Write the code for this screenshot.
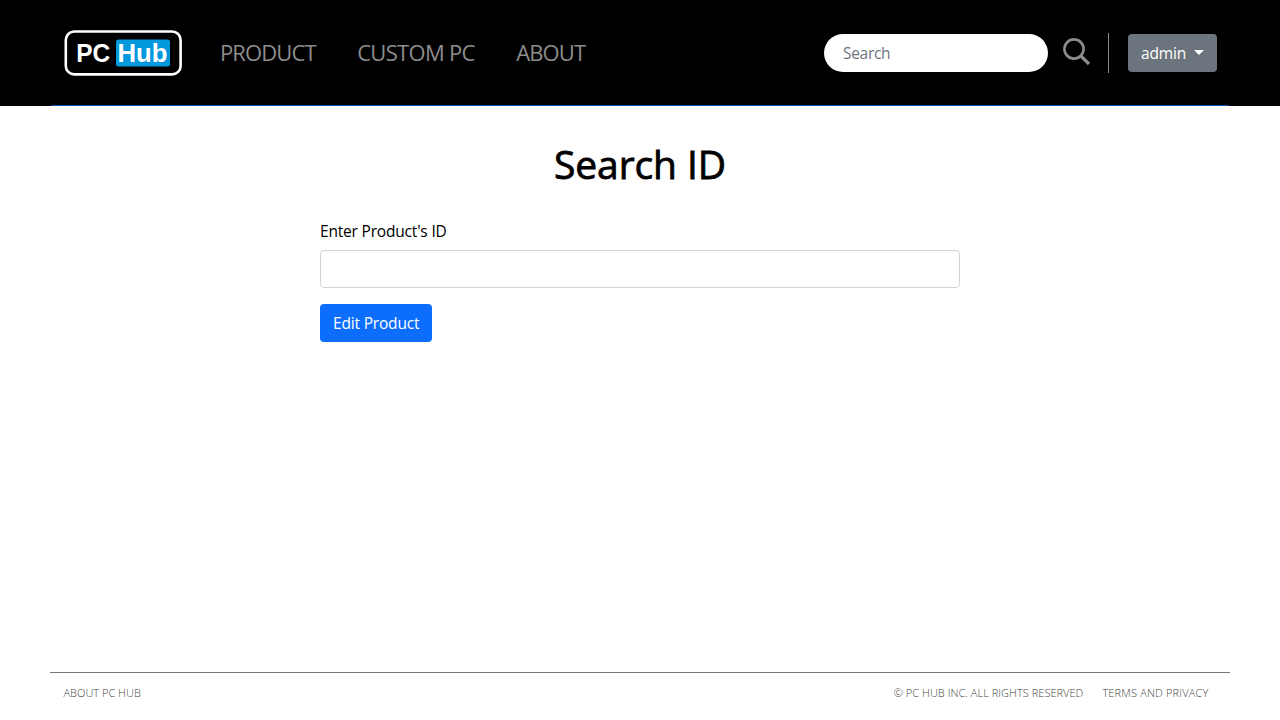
<svelte:head><title>PC Hub</title></svelte:head>

<div class="page">
  <header>
    <div class="bar">
      <a class="logo" href="#home" aria-label="PC Hub">
        <svg width="118" height="46" viewBox="0 0 118 46">
          <rect x="1.8" y="1.5" width="114.8" height="42.9" rx="8.5" fill="none" stroke="#fff" stroke-width="2.6" />
          <rect x="52" y="9.5" width="54" height="27" rx="2.5" fill="#0499dd" />
          <text x="12.3" y="32" textLength="34" lengthAdjust="spacingAndGlyphs">PC</text>
          <text x="53.5" y="32" textLength="50" lengthAdjust="spacingAndGlyphs">Hub</text>
        </svg>
      </a>
      <nav>
        <a class="n1" href="#product">PRODUCT</a>
        <a class="n2" href="#custom">CUSTOM PC</a>
        <a class="n3" href="#about">ABOUT</a>
      </nav>
      <input class="search" placeholder="Search" />
      <svg class="glass" width="28" height="28" viewBox="0 0 28 28" fill="none" stroke="#8c8c8c">
        <circle cx="11" cy="11" r="9.6" stroke-width="2.6" />
        <path d="M17.8 17.8 L26 26" stroke-width="3.2" />
      </svg>
      <div class="rule"></div>
      <button class="admin">admin<span class="caret"></span></button>
    </div>
  </header>

  <main>
    <h1>Search ID</h1>
    <label for="pid">Enter Product's ID</label>
    <input id="pid" class="field" />
    <button class="edit">Edit Product</button>
  </main>

  <footer>
    <a class="f1" href="#about">ABOUT PC HUB</a>
    <span class="f2">© PC HUB INC. ALL RIGHTS RESERVED</span>
    <a class="f3" href="#terms">TERMS AND PRIVACY</a>
  </footer>
</div>

<style>
  :global(body) { margin: 0; overflow: hidden; }
  .page, input, button { font-family: "Segoe UI", "Open Sans", "Noto Sans", sans-serif; font-size: 15.5px; }
  .page { height: 720px; display: flex; flex-direction: column; background: #fff; color: #000; }
  * { box-sizing: border-box; }
  a { text-decoration: none; white-space: nowrap; }
  header { height: 106px; background: #000; padding: 0 51px; flex: none; }
  .bar { height: 106px; padding: 0 12px 0 13px; display: flex; align-items: center; border-bottom: 1px solid #0d4fb3; }
  .logo { display: block; height: 46px; margin-right: 38px; }
  .logo svg { display: block; }
  .logo text { font: bold 26px "Liberation Sans", Arial, sans-serif; fill: #fff; }
  nav { display: flex; gap: 41.6px; font-size: 22px; line-height: 33px; flex: 1; letter-spacing: -0.9px; }
  nav a { color: #8c8c8c; }
  .n2 { letter-spacing: -0.7px; }
  .search { width: 224px; height: 38px; border: 0; border-radius: 19px; padding: 0 19px; background: #fff; margin-right: 15px; letter-spacing: -0.3px; }
  .search::placeholder { color: #6c757d; opacity: 1; }
  .glass { margin: -2px 17px 0 0; }
  .rule { width: 1px; height: 40px; background: #8c8c8c; margin-right: 19px; }
  button { border: 0; border-radius: 4px; height: 38px; color: #fff; padding: 0 13px; white-space: nowrap; letter-spacing: -0.18px; }
  .admin { width: 89px; background: #6c757d; display: flex; align-items: center; }
  .caret { border: 5px solid transparent; border-top-color: #fff; border-bottom: 0; margin: -1px 0 0 8px; }
  main { width: 640px; margin: 0 auto; flex: 1; display: flex; flex-direction: column; align-items: flex-start; }
  h1 { align-self: center; font-size: 39px; line-height: 48px; font-weight: 500; letter-spacing: -0.1px; -webkit-text-stroke: 0.8px #000; margin: 34px 0 31px; }
  label { line-height: 24px; margin-bottom: 7px; letter-spacing: -0.19px; }
  .field { width: 640px; height: 38px; border: 1px solid #ced4da; border-radius: 4px; padding: 6px 12px; margin-bottom: 16px; }
  .edit { width: 112px; background: #0d6efd; }
  footer { height: 48px; margin: 0 50px; padding: 0 21.5px 9px 13.5px; border-top: 1px solid #777; display: flex; align-items: center; font-size: 11px; font-weight: 300; color: #444; white-space: nowrap; }
  footer a { color: #444; }
  .f1 { margin-right: auto; }
  .f2 { margin-right: 19px; letter-spacing: 0.03px; }
  .f3 { letter-spacing: 0.17px; }
</style>
